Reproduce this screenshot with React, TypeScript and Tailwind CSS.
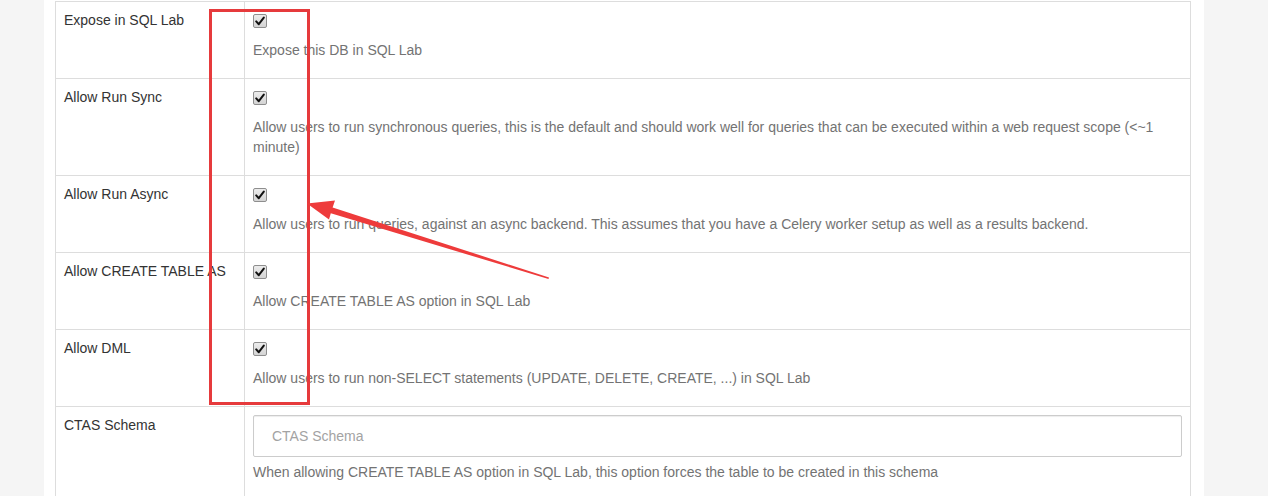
import React from "react";

function Check() {
  return (
    <span className="mt-[4px] inline-flex h-[14px] w-[14px] items-center justify-center rounded-[2px] border border-[#8e8e8e] bg-gradient-to-b from-[#ececec] to-[#d4d4d4]">
      <svg width="10" height="10" viewBox="0 0 10 10">
        <path d="M1.2 5.4 L3.8 8.2 L8.8 1.6" fill="none" stroke="#111" strokeWidth="2" strokeLinecap="round" strokeLinejoin="round" />
      </svg>
    </span>
  );
}

type Row = { label: string; help: string };

const rows: Row[] = [
  { label: "Expose in SQL Lab", help: "Expose this DB in SQL Lab" },
  {
    label: "Allow Run Sync",
    help: "Allow users to run synchronous queries, this is the default and should work well for queries that can be executed within a web request scope (<~1 minute)",
  },
  {
    label: "Allow Run Async",
    help: "Allow users to run queries, against an async backend. This assumes that you have a Celery worker setup as well as a results backend.",
  },
  { label: "Allow CREATE TABLE AS", help: "Allow CREATE TABLE AS option in SQL Lab" },
  {
    label: "Allow DML",
    help: "Allow users to run non-SELECT statements (UPDATE, DELETE, CREATE, ...) in SQL Lab",
  },
];

export default function App() {
  return (
    <div
      className="relative h-[496px] w-[1268px] overflow-hidden bg-[#f5f5f5] text-[14px] leading-[20px]"
      style={{ fontFamily: '"Liberation Sans", Arial, sans-serif' }}
    >
      <div className="ml-[44px] h-full w-[1160px] bg-white pl-[11px] pr-[13px] pt-[1px]">
        <div className="border-x border-t border-[#ddd]">
          {rows.map((r) => (
            <div key={r.label} className="flex border-b border-[#ddd]">
              <div className="w-[189px] shrink-0 border-r border-[#ddd] p-2 text-[#333]">{r.label}</div>
              <div className="flex-1 p-2">
                <div className="flex h-[20px] items-start">
                  <Check />
                </div>
                <div className="mb-[10px] mt-[10px] text-[#737373]">{r.help}</div>
              </div>
            </div>
          ))}
          <div className="flex">
            <div className="w-[189px] shrink-0 border-r border-[#ddd] p-2 text-[#333]">CTAS Schema</div>
            <div className="flex-1 p-2">
              <input
                className="block h-[42px] w-[929px] rounded-[2px] border border-[#ccc] px-[18px] text-[14px] text-[#555] shadow-[inset_0_1px_1px_rgba(0,0,0,0.075)] outline-none placeholder:text-[#a3a3a3]"
                placeholder="CTAS Schema"
              />
              <div className="mt-[5px] text-[#737373]">
                When allowing CREATE TABLE AS option in SQL Lab, this option forces the table to be created in this schema
              </div>
              <div className="h-[40px]" />
            </div>
          </div>
        </div>
      </div>

      <div className="absolute left-[209px] top-[9px] h-[396px] w-[101px] border-[3px] border-[#e63a3c]" />

      <svg className="absolute left-0 top-0" width="1268" height="496" viewBox="0 0 1268 496">
        <polygon
          points="307,203.5 335,200.5 332.6,207.4 549,277.6 548.5,279 330.8,213.2 329,219.5"
          fill="#ee3b3b"
        />
      </svg>
    </div>
  );
}
